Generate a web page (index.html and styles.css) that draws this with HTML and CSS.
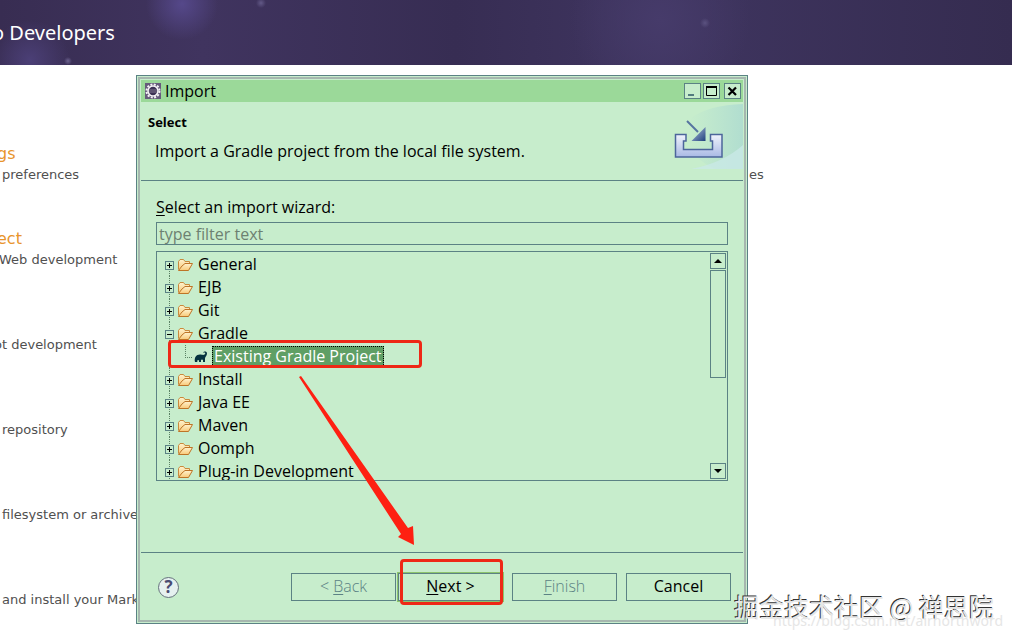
FILE: index.html
```html
<!DOCTYPE html>
<html lang="en">
<head>
<meta charset="utf-8">
<title>Import</title>
<link rel="stylesheet" href="styles.css">
</head>
<body>
<svg class="defs" aria-hidden="true">
  <defs>
    <linearGradient id="fold" x1="0" y1="0" x2="0" y2="1"><stop offset="0" stop-color="#fff3cf"/><stop offset="1" stop-color="#f8c978"/></linearGradient>
    <linearGradient id="tray" x1="0" y1="0" x2="0" y2="1"><stop offset="0" stop-color="#f0f3fc"/><stop offset="1" stop-color="#a9b9e4"/></linearGradient>
    <linearGradient id="head" x1="0" y1="0" x2="1" y2="1"><stop offset="0" stop-color="#b8cbe4"/><stop offset="1" stop-color="#1f3f7c"/></linearGradient>
    <linearGradient id="sky" x1="0" y1="0" x2="1" y2="0"><stop offset="0" stop-color="#a9d8d4" stop-opacity="0"/><stop offset="1" stop-color="#a2d3d2"/></linearGradient>
    <symbol id="folder" viewBox="0 0 16 14">
      <path d="M1.500 11.500V3.500L3 1.500H6.500L8 3.500H12.500V5.500" fill="url(#fold)" stroke="#c98a3c"/>
      <path d="M1.500 12.500L5 8L8 5.500H15.500L11.500 12.500Z" fill="url(#fold)" stroke="#bd7427"/>
    </symbol>
  </defs>
</svg>

<header class="banner"><h1 class="cut">o Developers</h1></header>
<main class="welcome">
  <section class="entry"><h2 class="nudge"><a href="#">gs</a></h2><p>preferences</p><p>es</p></section>
  <section class="entry"><h2 class="nudge"><a href="#">ect</a></h2><p class="nudge">Web development</p></section>
  <section class="entry"><h2></h2><p class="cut">ot development</p></section>
  <section class="entry"><h2></h2><p>repository</p></section>
  <section class="entry"><h2></h2><p>filesystem or archive</p></section>
  <section class="entry"><h2></h2><p>and install your Market</p></section>
</main>

<div class="dialog" role="dialog" aria-labelledby="dlg-title">
  <div class="frame">
    <div class="titlebar">
      <svg class="app-icon" viewBox="0 0 16 16"><rect width="16" height="16" fill="#665b7b"/><circle cx="8" cy="8" r="6.500" fill="none" stroke="#f4f2f5" stroke-width="2" stroke-dasharray="2 1.400"/><circle cx="8" cy="8" r="5" fill="#3c3154" stroke="#f4f2f5" stroke-width="1.600"/><path d="M4 7H12M4 9H12" stroke="#81768f"/></svg>
      <span id="dlg-title" class="caption">Import</span>
      <button class="win" aria-label="Minimize"><svg viewBox="0 0 15 14"><path d="M3 11H9" stroke="#527b7e" stroke-width="2"/></svg></button>
      <button class="win" aria-label="Maximize"><svg viewBox="0 0 15 14"><path d="M2.500 2V11.500H12.500V2" fill="none" stroke="#000"/><path d="M2 3H13" stroke="#000" stroke-width="2"/></svg></button>
      <button class="win close" aria-label="Close"><svg viewBox="0 0 15 14"><path d="M3.500 3.500L11 11M11 3.500L3.500 11" stroke="#000" stroke-width="2.200"/></svg></button>
    </div>
    <div class="intro">
      <div class="intro-text">
        <h2>Select</h2>
        <p>Import a Gradle project from the local file system.</p>
      </div>
      <svg class="wizard-art" viewBox="0 0 74 67">
        <path d="M22 16Q40 3 74 2V67H46Q10 51 22 16Z" fill="url(#sky)" opacity=".6"/>
        <path d="M22 67Q54 61 74 43V67Z" fill="#c9e9e6" opacity=".8"/>
        <path d="M6.500 32.500H17V39H14.500V47.500H43.500V39H41.500V32.500H53V55H6.500Z" fill="url(#tray)" stroke="#4c659b" stroke-width="1.500"/>
        <path d="M18 19L29 30" stroke="#5674a0" stroke-width="2"/>
        <path d="M36.500 25V39H22.500Z" fill="url(#head)"/>
      </svg>
    </div>
    <div class="body">
      <label for="filter"><u>S</u>elect an import wizard:</label>
      <input id="filter" type="text" placeholder="type filter text">
      <div class="tree-box">
        <ul class="tree" role="tree">
          <li><button class="twist" aria-label="Expand General"></button><svg><use href="#folder"/></svg><span>General</span></li>
          <li><button class="twist" aria-label="Expand EJB"></button><svg><use href="#folder"/></svg><span>EJB</span></li>
          <li><button class="twist" aria-label="Expand Git"></button><svg><use href="#folder"/></svg><span>Git</span></li>
          <li><button class="twist open" aria-label="Collapse Gradle"></button><svg><use href="#folder"/></svg><span>Gradle</span></li>
          <li class="child"><svg class="elephant" viewBox="0 0 14 12"><path d="M1 11C0 7 2 3.500 6 3.500C8 3.500 9 4.500 10.500 3.500C11.500 3 11.500 1.800 10.500 1.500C9.800 1.300 9.500 2 9.200 1.500C9.800 0 13 0 13 2.500C13 5 11 5.500 11 7.500V11H9V9C8.500 8.200 7.500 8.200 7 9V11H5V9.500C4.500 8.800 3.800 8.800 3.300 9.500V11Z" fill="#06343f"/></svg><span class="selected">Existing Gradle Project</span></li>
          <li><button class="twist" aria-label="Expand Install"></button><svg><use href="#folder"/></svg><span>Install</span></li>
          <li><button class="twist" aria-label="Expand Java EE"></button><svg><use href="#folder"/></svg><span>Java EE</span></li>
          <li><button class="twist" aria-label="Expand Maven"></button><svg><use href="#folder"/></svg><span>Maven</span></li>
          <li><button class="twist" aria-label="Expand Oomph"></button><svg><use href="#folder"/></svg><span>Oomph</span></li>
          <li><button class="twist" aria-label="Expand Plug-in Development"></button><svg><use href="#folder"/></svg><span>Plug-in Development</span></li>
        </ul>
        <div class="scrollbar">
          <button class="step" aria-label="Scroll up"><svg viewBox="0 0 8 4"><path d="M4 0L8 4H0Z"/></svg></button>
          <div class="thumb"></div>
          <button class="step down" aria-label="Scroll down"><svg viewBox="0 0 8 4"><path d="M0 0H8L4 4Z"/></svg></button>
        </div>
      </div>
    </div>
    <div class="footer">
      <button class="help" aria-label="Help">?</button>
      <button class="btn" disabled><span>&lt; <u>B</u>ack</span></button>
      <button class="btn default"><span><u>N</u>ext &gt;</span></button>
      <button class="btn" disabled><span><u>F</u>inish</span></button>
      <button class="btn"><span>Cancel</span></button>
    </div>
  </div>
  <div class="mark mark-item"></div>
  <div class="mark mark-next"></div>
  <svg class="arrow" viewBox="0 0 120 174"><path d="M1 2L3 1L110 153L115 151L116 170L100 162L103 159Z" fill="#fe2012"/></svg>
</div>

<div class="watermark-url">https://blog.csdn.net/airnorthword</div>
<div class="watermark">掘金技术社区 @ 禅思院</div>
</body>
</html>
```

FILE: styles.css
```css
* { box-sizing: border-box; }
body {
  margin: 0;
  height: 100vh;
  position: relative;
  overflow: hidden;
  background: #fff;
  color: #505050;
  font: 13px/20px "DejaVu Sans", Verdana, sans-serif;
}
h1, h2, p, ul { margin: 0; padding: 0; font-weight: normal; }
button { padding: 0; font: inherit; color: inherit; background: none; border: 1px solid #5b8284; }
svg { display: block; flex: none; }
.defs { position: absolute; width: 0; height: 0; }

.banner {
  height: 65px;
  display: flex;
  align-items: center;
  overflow: hidden;
  color: #fff;
  background:
    radial-gradient(circle at 68px 61px, #6d6390 0, transparent 4px),
    radial-gradient(circle at 261px 3px, #625987 0, transparent 5px),
    radial-gradient(circle at 705px 23px, #5b5280 0, transparent 5px),
    radial-gradient(circle at 182px 4px, #55488a 0, transparent 36px),
    radial-gradient(circle at 30px 60px, #4b3f76 0, transparent 40px),
    radial-gradient(circle at 660px 20px, #463b6a 0, transparent 90px),
    linear-gradient(90deg, #382d52, #40345f 20%, #372d53 45%, #3f3560 65%, #352c50);
}
.banner h1 { font: 20px/28px "Noto Sans", sans-serif; }
.cut { margin-left: -8px; }
.nudge { margin-left: -3px; }

.welcome { padding-top: 78px; }
.entry { height: 85px; display: grid; grid-template: 22px 20px / 747px 1fr; align-content: start; }
.entry h2 { grid-column: 1 / -1; font-size: 16px; line-height: 22px; }
.entry h2 a { color: #e8942c; text-decoration: none; }
.entry p { padding-left: 2px; white-space: nowrap; }

.dialog {
  position: absolute;
  left: 136px;
  top: 75px;
  width: 612px;
  padding: 1px;
  border: 1px solid #5b8284;
  background: #c7edcc;
  color: #000;
  font: 16px/22px "Open Sans", "Noto Sans", sans-serif;
}
.frame { padding: 1px; border: 2px solid #a6b7af; }

.titlebar { height: 22px; padding: 0 2px 0 4px; display: flex; align-items: center; background: #9bd999; }
.app-icon { width: 16px; height: 16px; }
.caption { flex: 1; padding-left: 4px; }
.win { width: 17px; height: 16px; margin-left: 2px; background: #c7edcc; }
.win.close { margin-left: 4px; }
.win svg { width: 15px; height: 14px; }

.intro { height: 79px; display: flex; justify-content: space-between; border-bottom: 1px solid #5b8284; }
.intro-text { padding: 10px 0 0 7px; }
.intro h2 { font-size: 13px; line-height: 20px; font-weight: bold; }
.intro p { padding: 8px 0 0 7px; }
.wizard-art { width: 74px; height: 67px; }

.body { height: 371px; padding: 15px 15px 0; }
.body label { display: block; }
u { text-underline-offset: 2px; }
#filter {
  display: block;
  width: 100%;
  height: 23px;
  margin: 4px 0 6px;
  padding: 0 2px;
  border: 1px solid #5b8284;
  background: none;
  font: inherit;
}
#filter::placeholder { color: #6d8171; opacity: 1; }

.tree-box { height: 230px; padding: 1px; display: flex; overflow: hidden; border: 1px solid #5b8284; }
.tree { flex: 1; list-style: none; }
.tree li {
  height: 23px;
  padding-left: 7px;
  display: flex;
  align-items: center;
  background: repeating-linear-gradient(#5b8264 0 1px, transparent 1px 2px) 11px 0 / 1px 100% no-repeat;
}
.tree li:first-child { background-position: 11px 12px; }
.tree li span { line-height: 20px; padding-bottom: 2px; }
.tree li svg { width: 16px; height: 14px; margin: 0 5px 0 3px; }
.twist {
  width: 9px;
  height: 9px;
  margin-top: 2px;
  background:
    linear-gradient(#000, #000) center / 5px 1px no-repeat,
    linear-gradient(#000, #000) center / 1px 5px no-repeat,
    #c7edcc;
}
.twist.open { background: linear-gradient(#000, #000) center / 5px 1px no-repeat, #c7edcc; }
.tree .child {
  padding-left: 28px;
  background:
    repeating-linear-gradient(#5b8264 0 1px, transparent 1px 2px) 11px 0 / 1px 100% no-repeat,
    repeating-linear-gradient(#5b8264 0 1px, transparent 1px 2px) 27px 0 / 1px 12px no-repeat,
    repeating-linear-gradient(90deg, #5b8264 0 1px, transparent 1px 2px) 27px 12px / 8px 1px no-repeat;
}
.tree .child svg { width: 14px; height: 12px; margin: 0 4px 0 8px; }
.tree .selected { padding: 0 1px; line-height: 19px; border: 1px dotted #000; background: #5f9f65; color: #fff; }
.scrollbar { width: 16px; display: flex; flex-direction: column; }
.step { width: 16px; height: 16px; display: flex; align-items: center; justify-content: center; }
.step svg { width: 8px; height: 4px; }
.thumb { height: 108px; margin-top: 1px; border: 1px solid #5b8284; }
.down { margin-top: auto; }

.footer {
  height: 67px;
  padding: 2px 12px 0 17px;
  display: flex;
  align-items: center;
  gap: 9px;
  border-top: 1px solid #5b8284;
}
.help {
  width: 21px;
  height: 21px;
  margin-right: auto;
  border: 1px solid #65717d;
  border-radius: 50%;
  background: #e6f1f0;
  color: #4a4c72;
  font-size: 17px;
  line-height: 18px;
  font-weight: bold;
}
.btn { width: 105px; height: 28px; line-height: 24px; padding-bottom: 2px; }
.btn:disabled { color: #5b8284; font-weight: 300; }
.btn.default { margin-left: -7px; outline: 1px solid #8cc46c; }

.mark { position: absolute; border: 3px solid #ee2816; border-radius: 4px; }
.mark-item { left: 31px; top: 264px; width: 254px; height: 28px; }
.mark-next { left: 263px; top: 483px; width: 103px; height: 46px; }
.arrow { position: absolute; left: 161px; top: 299px; width: 120px; height: 174px; }

.watermark, .watermark-url { position: absolute; white-space: nowrap; }
.watermark {
  right: 18px;
  bottom: 16px;
  color: #e6e6e6;
  font-size: 25px;
  line-height: 34px;
  text-shadow: -1px -1px 0 #333;
  font-family: "Noto Sans CJK SC", sans-serif;
}
.watermark-url {
  right: 9px;
  bottom: 8px;
  color: #e6e6e6;
  font-size: 14px;
  line-height: 20px;
  font-family: "Noto Sans", sans-serif;
}
```
